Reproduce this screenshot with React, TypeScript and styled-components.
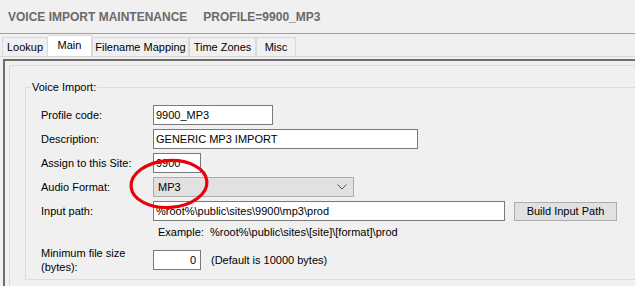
import styled, { createGlobalStyle } from "styled-components";

const GlobalStyle = createGlobalStyle`
  body {
    margin: 0;
    overflow: hidden;
    background: #f0f0f0;
    font-family: "Liberation Sans", Arial, sans-serif;
    font-size: 11px;
    color: #000;
  }
`;

const tabs = [
  { name: "Lookup", w: 46 },
  { name: "Main", w: 44, active: true },
  { name: "Filename Mapping", w: 97 },
  { name: "Time Zones", w: 67 },
  { name: "Misc", w: 40 },
];

export default function App() {
  return (
    <Page>
      <GlobalStyle />
      <TitleBar>
        <TitleText>VOICE IMPORT MAINTENANCE</TitleText>
        <TitleText>PROFILE=9900_MP3</TitleText>
      </TitleBar>

      <TabStrip>
        {tabs.map((t) => (
          <Tab key={t.name} $w={t.w} $active={!!t.active}>
            {t.name}
          </Tab>
        ))}
      </TabStrip>

      <TabPanel>
        <Frame>
          <InnerFrame>
            <GroupBox>
              <Legend>Voice Import:</Legend>
              <Form>
                <Label>Profile code:</Label>
                <Field $w={120} defaultValue="9900_MP3" readOnly />

                <Label>Description:</Label>
                <Field $w={265} defaultValue="GENERIC MP3 IMPORT" readOnly />

                <Label>Assign to this Site:</Label>
                <Field $w={48} defaultValue="9900" readOnly />

                <Label>Audio Format:</Label>
                <Select $w={201}>
                  <span>MP3</span>
                  <svg width="10" height="6" viewBox="0 0 10 6">
                    <polyline
                      points="0.5,0.5 5,5 9.5,0.5"
                      fill="none"
                      stroke="#555"
                      strokeWidth="1"
                    />
                  </svg>
                </Select>

                <Label>Input path:</Label>
                <Inline $gap={9}>
                  <Field
                    $w={352}
                    defaultValue="%root%\public\sites\9900\mp3\prod"
                    readOnly
                  />
                  <Button>Build Input Path</Button>
                </Inline>

                <span />
                <Example>
                  Example:&nbsp;&nbsp;%root%\public\sites\[site]\[format]\prod
                </Example>

                <Label>
                  Minimum file size
                  <br />
                  (bytes):
                </Label>
                <Inline $gap={10}>
                  <Field $w={48} $right defaultValue="0" readOnly />
                  <span>(Default is 10000 bytes)</span>
                </Inline>
              </Form>
            </GroupBox>
          </InnerFrame>
        </Frame>
      </TabPanel>

      <Highlight width="86" height="56" viewBox="0 0 86 56">
        <ellipse
          cx="42"
          cy="28"
          rx="38"
          ry="23.5"
          fill="none"
          stroke="#e8000b"
          strokeWidth="3.2"
          transform="rotate(-4 42 28)"
        />
      </Highlight>
    </Page>
  );
}

const Page = styled.div`
  position: relative;
  width: 635px;
  height: 286px;
  overflow: hidden;
  background: #f0f0f0;
`;

const TitleBar = styled.div`
  height: 33px;
  display: flex;
  align-items: center;
  gap: 16px;
  padding-left: 8px;
  border-bottom: 1px solid #a0a0a0;
`;

const TitleText = styled.span`
  font-size: 12px;
  font-weight: bold;
  color: #6a6a6a;
`;

const TabStrip = styled.div`
  height: 22px;
  display: flex;
  align-items: flex-end;
  padding-left: 2px;
`;

const Tab = styled.div<{ $w: number; $active: boolean }>`
  box-sizing: border-box;
  width: ${(p) => p.$w}px;
  height: ${(p) => (p.$active ? 21 : 19)}px;
  display: flex;
  align-items: center;
  justify-content: center;
  padding-bottom: ${(p) => (p.$active ? 3 : 0)}px;
  background: ${(p) => (p.$active ? "#fff" : "#f0f0f0")};
  border: 1px solid #d9d9d9;
  border-bottom: none;
  border-left: ${(p) => (p.$active ? "none" : "1px solid #d9d9d9")};
  white-space: nowrap;
  position: relative;
  z-index: ${(p) => (p.$active ? 1 : 0)};
`;

const TabPanel = styled.div`
  border-top: 1px solid #d9d9d9;
  padding: 2px 0 0 3px;
`;

const Frame = styled.div`
  border-top: 2px solid #6d6d6d;
  border-left: 2px solid #6d6d6d;
  padding: 4px 0 0 4px;
`;

const InnerFrame = styled.div`
  border-top: 1px solid #dcdcdc;
  border-left: 1px solid #dcdcdc;
  padding: 14px 0 0 15px;
  height: 260px;
`;

const GroupBox = styled.fieldset`
  width: 700px;
  margin: 0;
  padding: 11px 0 5px 15px;
  border: 1px solid #dcdcdc;
  border-right: none;
`;

const Legend = styled.legend`
  margin-left: -10px;
  padding: 0 1px;
  line-height: 14px;
`;

const Form = styled.div`
  display: grid;
  grid-template-columns: 112px auto;
  row-gap: 4px;
  align-items: center;
`;

const Label = styled.div`
  line-height: 14px;
  white-space: nowrap;
`;

const Field = styled.input<{ $w: number; $right?: boolean }>`
  box-sizing: border-box;
  width: ${(p) => p.$w}px;
  height: 20px;
  margin: 0;
  padding: 0 ${(p) => (p.$right ? 4 : 2)}px 0 2px;
  border: 1px solid #7a7a7a;
  background: #fff;
  font: inherit;
  color: #000;
  text-align: ${(p) => (p.$right ? "right" : "left")};
  outline: none;
`;

const Select = styled.div<{ $w: number }>`
  box-sizing: border-box;
  width: ${(p) => p.$w}px;
  height: 20px;
  display: flex;
  align-items: center;
  justify-content: space-between;
  padding: 0 6px 0 4px;
  background: #e1e1e1;
  border: 1px solid #adadad;
`;

const Inline = styled.div<{ $gap: number }>`
  display: flex;
  align-items: center;
  gap: ${(p) => p.$gap}px;
`;

const Button = styled.div`
  box-sizing: border-box;
  width: 103px;
  height: 19px;
  display: flex;
  align-items: center;
  justify-content: center;
  background: #e1e1e1;
  border: 1px solid #adadad;
  white-space: nowrap;
`;

const Example = styled.div`
  height: 17px;
  line-height: 14px;
  padding-left: 5px;
  white-space: nowrap;
`;

const Highlight = styled.svg`
  position: absolute;
  left: 127px;
  top: 156px;
`;
